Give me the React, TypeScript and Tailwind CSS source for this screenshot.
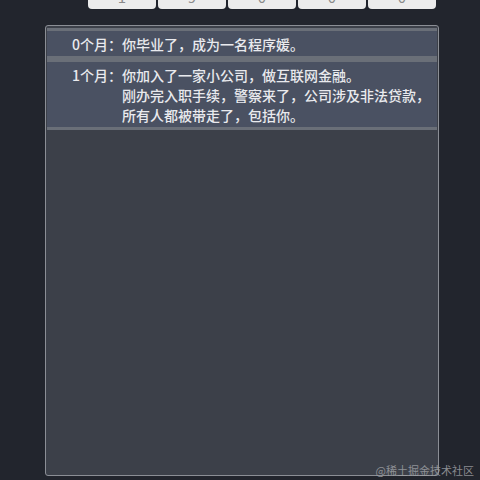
const digits = ["1", "9", "0", "0", "0"];

const events = [
  { month: "0个月：", lines: ["你毕业了，成为一名程序媛。"] },
  {
    month: "1个月：",
    lines: [
      "你加入了一家小公司，做互联网金融。",
      "刚办完入职手续，警察来了，公司涉及非法贷款，",
      "所有人都被带走了，包括你。",
    ],
  },
];

export default function App() {
  return (
    <div
      className="relative h-[480px] w-[480px] overflow-hidden bg-[#22252d]"
      style={{ fontFamily: '"Noto Sans CJK SC", "Noto Sans", sans-serif' }}
    >
      {/* Counter buttons (cut off at the top) */}
      <div className="ml-[88px] flex gap-[2px]">
        {digits.map((d, i) => (
          <div
            key={i}
            className="-mt-[23px] flex h-[32px] w-[68px] items-end justify-center rounded-[4px] bg-[#ececec] pb-[5px] text-[15px] leading-none text-[#8a8a8a]"
          >
            {d}
          </div>
        ))}
      </div>

      {/* Story panel */}
      <div className="ml-[45px] mt-[16px] h-[451px] w-[394px] rounded-[3px] border border-[#8b8e95] bg-[#3c4049] px-px pt-[2px]">
        {events.map((e, i) => (
          <div
            key={i}
            className="flex bg-[#4a5162] pt-[4px] pb-[5px] text-[14px] font-medium leading-[20px] text-[#e9eaee] shadow-[inset_0_3px_0_#6a6f78,inset_0_-3px_0_#6a6f78]"
          >
            <div className="w-[75px] shrink-0 pt-[2px] text-right">{e.month}</div>
            <div className="pt-[2px]">
              {e.lines.map((l, j) => (
                <div key={j}>{l}</div>
              ))}
            </div>
          </div>
        ))}
      </div>

      <div className="absolute bottom-[4px] right-[6px] text-[11px] leading-none text-[#a2a4a8] opacity-80">
        @稀土掘金技术社区
      </div>
    </div>
  );
}
